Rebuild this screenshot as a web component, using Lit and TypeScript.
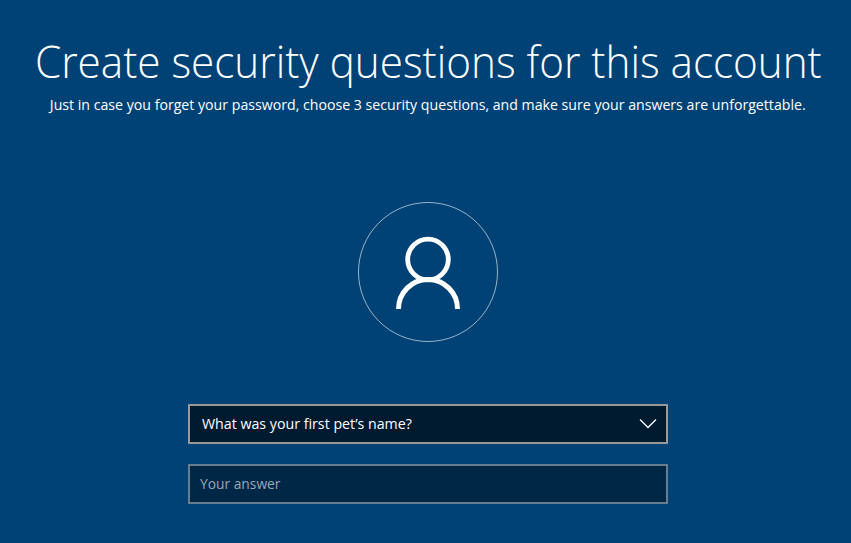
import { LitElement, html, css } from "lit";
import { customElement } from "lit/decorators.js";

@customElement("app-root")
export class AppRoot extends LitElement {
  static styles = css`
    :host { display: flex; flex-direction: column; align-items: center; box-sizing: border-box; width: 851px; height: 543px; overflow: hidden; background: #004275; color: #fff; font-family: "Open Sans", "Noto Sans", sans-serif; padding-left: 5px; }
    h1 { margin: 32px 0 0; height: 58px; line-height: 58px; font-size: 45px; font-weight: 300; white-space: nowrap; }
    h1 span { display: inline-block; transform: scaleX(.938); }
    p { margin: 4px 0 0; height: 20px; line-height: 20px; font-size: 15px; white-space: nowrap; }
    p span { display: inline-block; transform: scaleX(.943); }
    .avatar { display: block; flex: none; width: 140px; height: 140px; margin-top: 88px; }
    .form { display: flex; flex-direction: column; gap: 20px; margin-top: 62px; width: 480px; }
    .box { box-sizing: border-box; height: 40px; border: 2px solid #999; background: #001a2f; display: flex; align-items: center; justify-content: space-between; font-size: 15px; line-height: 20px; padding: 0 9px 0 12px; }
    .box span { padding-bottom: 2px; transform: scaleX(.947); transform-origin: left center; }
    .answer { background: #002746; border-color: #667d90; color: #99a9b5; padding-left: 10px; }
    .answer span { transform: scaleX(.92); }
  `;
  render() {
    return html`
      <h1><span>Create security questions for this account</span></h1>
      <p><span>Just in case you forget your password, choose 3 security questions, and make sure your answers are unforgettable.</span></p>
      <svg class="avatar" viewBox="0 0 140 140" fill="none" stroke="#fff">
        <circle cx="70" cy="70" r="69.5" stroke-opacity=".6"/>
        <circle cx="70" cy="57.5" r="20.3" stroke-width="4.8"/>
        <path d="M40.5 107a29.5 29.5 0 0 1 59 0" stroke-width="5"/>
      </svg>
      <div class="form">
        <div class="box"><span>What was your first pet’s name?</span>
          <svg width="18" height="10" viewBox="0 0 18 10" fill="none" stroke="#fff" stroke-width="1.3"><path d="M1 .5l8 8 8-8"/></svg>
        </div>
        <div class="box answer"><span>Your answer</span></div>
      </div>`;
  }
}
